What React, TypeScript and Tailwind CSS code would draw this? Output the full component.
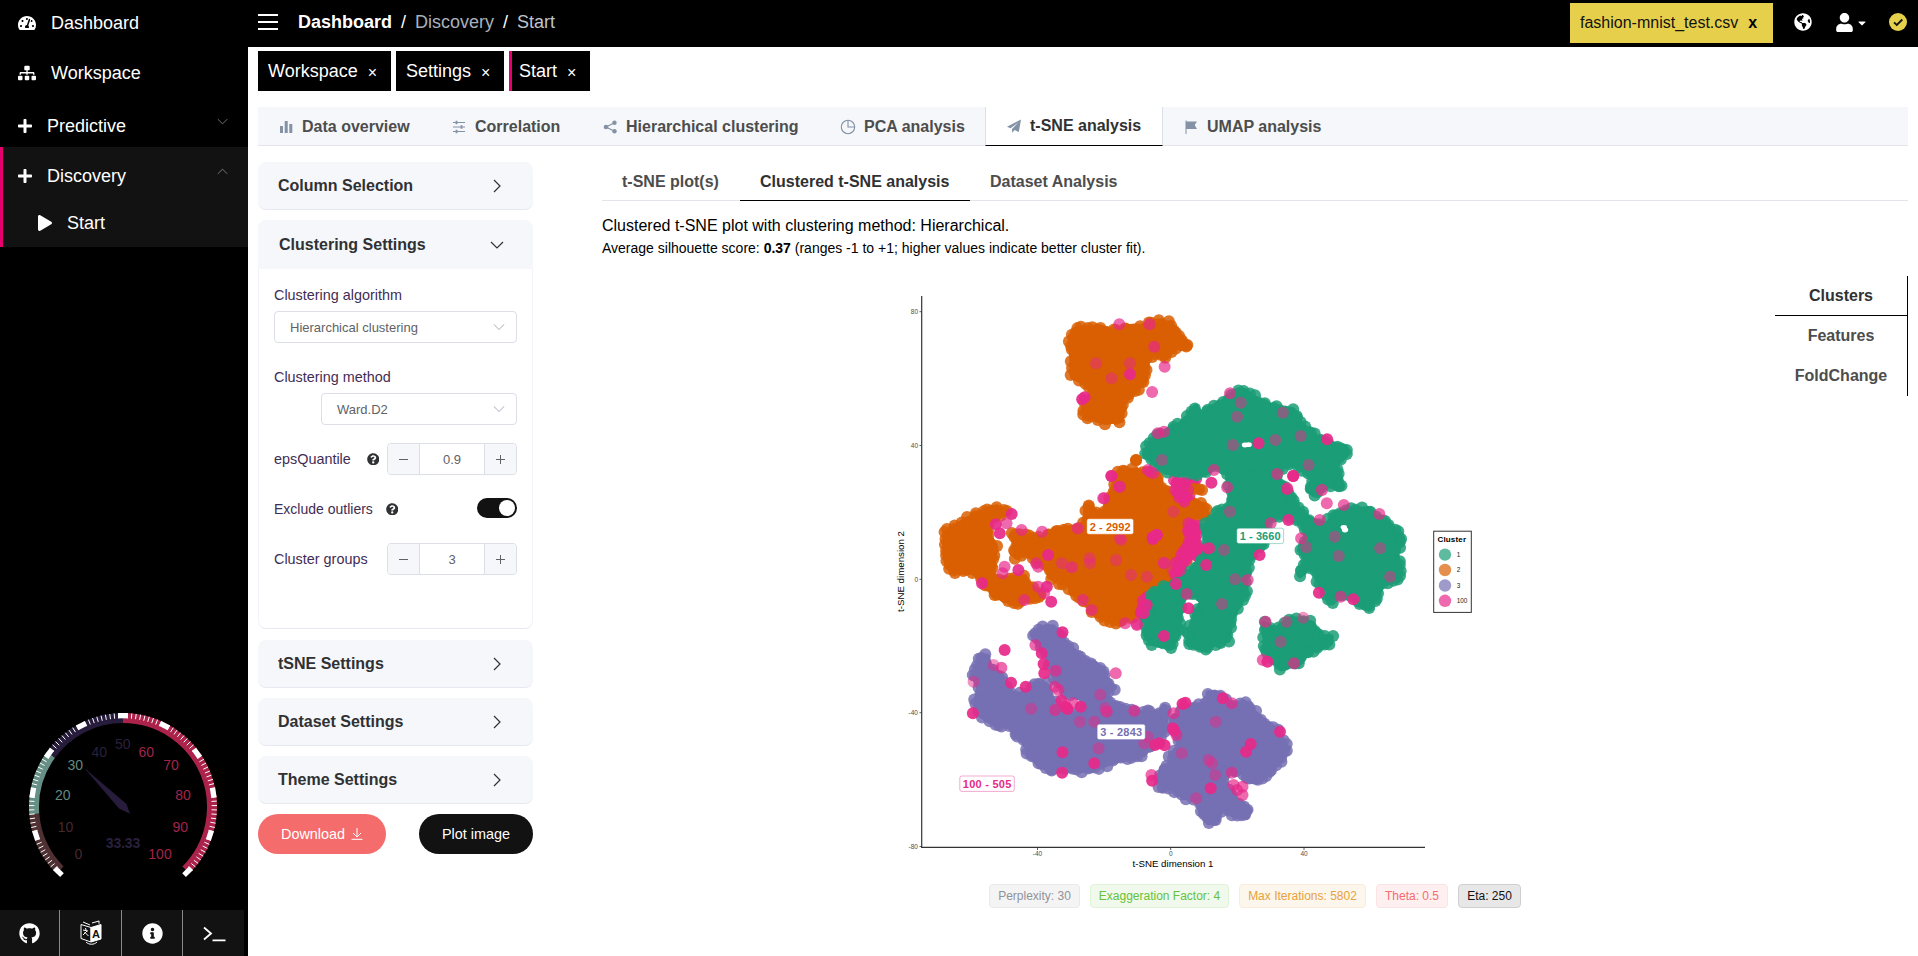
import React from "react";
import {
  FaTachometerAlt, FaSitemap, FaPlus, FaPlay, FaGithub, FaInfoCircle, FaGlobeAmericas, FaUser, FaQuestionCircle, FaCaretDown,
} from "react-icons/fa";

const GREEN = "#1b9e77";
const ORANGE = "#d95f02";
const PURPLE = "#7570b3";
const PINK = "#e7298a";

type Pt = [number, number];

/* Plot bands, each with its own origin and units per pixel. */
const band = (ox: number, oy: number, sx: number) => (s: string): Pt[] =>
  s.trim().split(/\s+/).map((p) => {
    const [x, y] = p.split(",").map(Number);
    return [ox + x / sx, oy + y / 3];
  });
const top = band(880, 280, 2.8);
const mid = band(880, 470, 2.529);
const low = band(880, 610, 2.8);
const core = band(1080, 440, 3);

const blobs: { color: string; pts: Pt[] }[] = [
  { color: ORANGE, pts: top("534,170 552,148 592,146 622,144 655,155 692,140 712,150 732,140 778,124 815,133 828,160 860,188 858,205 828,200 795,235 772,212 748,240 742,300 710,335 680,370 675,420 628,425 580,410 570,385 598,335 572,305 540,290 538,225") },
  { color: ORANGE, pts: mid("600,10 632,3 665,5 705,20 712,55 750,85 800,95 820,110 825,135 790,140 755,150 765,190 775,240 765,300 740,325 700,340 680,370 665,400 640,440 595,458 550,435 525,405 500,375 485,368 480,340 455,335 430,320 425,285 400,275 370,245 345,260 345,235 335,195 370,200 415,205 440,182 485,175 520,160 522,110 550,130 575,120 585,75") },
  { color: ORANGE, pts: mid("165,190 205,160 245,135 295,112 320,130 275,150 270,190 290,225 285,295 255,310 300,330 365,320 375,345 410,375 400,385 335,398 290,375 260,330 245,305 195,305 170,290 165,240") },
  { color: PINK, pts: core("285,125 345,122 330,150 318,180 300,170") },
  { color: PINK, pts: core("330,250 350,255 352,320 385,330 380,370 340,335 300,385 290,430 315,462 285,435 292,375 325,325") },
  { color: PINK, pts: core("205,470 190,540 180,525 195,485") },
  { color: ORANGE, pts: core("345,140 360,155 350,143") },
  { color: GREEN, pts: top("742,520 757,490 790,460 840,435 872,402 885,380 897,410 925,385 962,365 1000,332 1020,333 1055,360 1110,385 1155,390 1175,430 1205,458 1235,485 1300,502 1305,525 1270,550 1285,580 1290,625 1255,615 1215,642 1200,630 1215,600 1180,565 1150,550 1115,565 1085,585 1100,600 1140,650 1140,700 990,700 985,590 960,560 940,560 905,582 860,580 800,575 775,555") },
  { color: GREEN, pts: mid("880,15 1000,15 1035,75 1050,110 1075,140 1100,155 1130,165 1155,130 1180,120 1235,118 1255,150 1290,165 1320,205 1305,250 1315,300 1310,330 1270,340 1260,370 1235,415 1215,405 1200,375 1150,370 1140,395 1120,360 1100,300 1080,290 1062,315 1080,270 1062,240 1085,210 1070,160 1030,130 990,145 970,170 972,220 935,260 928,300 920,330 925,370 900,420 885,460 880,510 855,515 820,538 780,520 785,480 795,440 815,395 790,365 770,365 760,400 757,440 750,500 735,530 690,520 675,500 675,460 682,420 690,380 715,350 762,335 775,320 795,290 815,265 850,240 825,205 820,175 850,135 890,100 890,60") },
  { color: GREEN, pts: mid("975,490 970,462 1000,480 1035,450 1070,448 1095,465 1110,500 1140,502 1138,520 1110,535 1080,540 1065,575 1015,595 990,565 975,540") },
  { color: PURPLE, pts: low("430,75 450,57 485,52 500,80 535,115 550,130 565,160 600,160 625,180 635,215 655,232 630,250 622,268 665,285 720,310 755,308 780,320 795,290 800,320 792,370 770,380 740,430 700,445 660,450 615,470 565,480 530,465 485,485 450,465 415,435 415,410 400,390 375,370 370,350 320,340 275,310 270,270 280,240 265,190 280,150 300,140 305,170 340,200 360,250 400,255 430,225 465,225 482,270 515,312 560,312 580,270 525,250 490,205 475,150 450,100") },
  { color: PURPLE, pts: low("920,250 940,250 955,255 975,285 1020,278 1050,310 1080,340 1110,365 1140,415 1120,450 1090,485 1055,515 1025,510 1015,480 965,480 962,530 1000,575 1035,600 1027,620 985,612 960,590 940,630 920,637 900,610 890,570 850,560 820,530 790,540 780,510 790,475 830,460 815,435 840,410 830,370 825,330 850,300 885,290 920,280") },
];

const gaps: Pt[] = [...top("1022,495 1032,494"), ...mid("1173,172 1176,180")];

const solid: Pt[] = [
  ...top("700,283 573,352 566,358 1060,490 1252,478 1157,588 928,608 648,588"),
  ...mid("333,132 293,163 303,190 690,207 700,195 425,255 350,300 433,395 422,350 780,415 718,498 960,255 1033,150 1045,18 1110,368 1197,388 825,285 258,340 980,575"),
  ...core("290,130 305,150 315,172 345,318 350,325 338,320 345,295 335,265 218,292 230,285 190,520 200,495 288,432"),
  ...low("511,67 458,162 460,190 349,120 367,218 408,230 260,310 520,290 525,297 508,272 562,290 820,355 824,362 770,405 782,400 797,406 511,427 600,460 847,282 855,278 1120,365 1038,402 1025,425 453,130 960,265 926,535 510,488 762,512"),
];
const light: Pt[] = [
  ...top("670,133 755,133 797,260 762,336 768,200 980,340 778,460 795,455 1112,582 1140,628 935,570 972,622 750,570 672,620 625,655 765,580"),
  ...mid("567,85 585,18 605,50 320,160 358,180 410,185 830,235 400,290 395,280 485,292 315,290 310,310 400,350 365,390 718,280 760,300 650,465 620,460 513,390 535,420 930,330 988,160 1030,55 1130,100 1173,105 1263,132 1112,150 1065,205 1165,380 975,455 968,570 1047,580 500,175 415,370"),
  ...core("315,130 285,150 325,150 388,325 325,250 300,375 320,462 170,552 210,95"),
  ...low("435,105 340,173 660,190 492,182 490,230 500,240 540,280 490,300 635,305 712,302 822,310 985,280 985,488 990,525 1000,540 1015,555 1015,530 760,495 830,375"),
];
const tinted: Pt[] = [
  ...top("605,250 648,295 700,250 1010,368 1000,410 1128,398 988,495 1107,480 1200,555 1237,630 790,540 1178,468"),
  ...mid("530,265 597,270 635,315 675,320 870,240 865,402 898,328 1118,60 1150,200 1160,258 1078,232 1265,235 1290,320 885,125 1028,455 1070,443 1013,515 740,300 460,280 610,210"),
  ...core("252,368 30,370 120,295 280,215"),
  ...low("262,215 423,296 630,295 617,254 560,335 600,335 750,380 740,400 612,415 845,430 940,335 920,450 930,460 938,495 885,565 318,165"),
];

const rimDots = (pts: Pt[]): Pt[] => {
  let seed = pts.length * 7919;
  const rnd = () => {
    seed = (seed * 16807) % 2147483647;
    return seed / 2147483647 - 0.5;
  };
  return pts.flatMap((p, i) => {
    const q = pts[(i + 1) % pts.length];
    const n = Math.max(1, Math.round(Math.hypot(q[0] - p[0], q[1] - p[1]) / 5));
    return Array.from({ length: n }, (_, k): Pt => [
      p[0] + ((q[0] - p[0]) * k) / n + rnd() * 5,
      p[1] + ((q[1] - p[1]) * k) / n + rnd() * 5,
    ]);
  });
};

const Dots = ({ pts, fill, o }: { pts: Pt[]; fill: string; o: number }) => (
  <g fill={fill} fillOpacity={o}>
    {pts.map(([x, y], i) => <circle key={i} cx={x} cy={y} r={6} />)}
  </g>
);

const PlotLabel = ({ x, y, w, color, text }: { x: number; y: number; w: number; color: string; text: string }) => (
  <g>
    <rect x={x} y={y} width={w} height={15.4} rx={2} fill="#fff" stroke={color} strokeOpacity={0.5} strokeWidth={0.8} />
    <text x={x + w / 2} y={y + 11.7} textAnchor="middle" fontSize={11} fontWeight="bold" fill={color} textLength={w - 6}>{text}</text>
  </g>
);

function ScatterPlot() {
  return (
    <svg width={620} height={600} viewBox="880 280 620 600" fontFamily="Liberation Sans, Arial, sans-serif">
      {blobs.map((b, i) => (
        <g key={i}>
          <polygon points={b.pts.map((p) => p.join(",")).join(" ")} fill={b.color} stroke={b.color} strokeWidth={6} strokeLinejoin="round" />
          <Dots pts={rimDots(b.pts)} fill={b.color} o={0.85} />
        </g>
      ))}
      <Dots pts={top("717,540 717,541")} fill={ORANGE} o={0.9} />
      {gaps.map(([x, y], i) => <ellipse key={i} cx={x} cy={y} rx={3.2} ry={2.4} fill="#fff" />)}
      <Dots pts={light} fill={PINK} o={0.7} />
      <Dots pts={solid} fill={PINK} o={0.92} />
      <Dots pts={tinted} fill={PINK} o={0.5} />

      <path d="M921.7 296V847.5M921 847.3H1425" stroke="#333" strokeWidth={1.2} fill="none" />
      <g stroke="#333" strokeWidth={0.8}>
        {[311.7, 445.5, 579.3, 712.7, 846.5].map((y) => <path key={y} d={`M919.5 ${y}h2`} />)}
        {[1037.5, 1170.7, 1304].map((x) => <path key={x} d={`M${x} 848v2`} />)}
      </g>
      <g fontSize={6.5} fill="#4d4d4d">
        {([["80", 311.7], ["40", 445.5], ["0", 579.3], ["-40", 712.7], ["-80", 846.5]] as [string, number][]).map(([t, y]) => (
          <text key={t} x={918} y={y + 2.2} textAnchor="end">{t}</text>
        ))}
        {([["-40", 1037.5], ["0", 1170.7], ["40", 1304]] as [string, number][]).map(([t, x]) => (
          <text key={t} x={x} y={855.6} textAnchor="middle">{t}</text>
        ))}
      </g>
      <text x={1173} y={866.5} fontSize={9.8} textAnchor="middle" textLength={81} lengthAdjust="spacingAndGlyphs">t-SNE dimension 1</text>
      <text transform="translate(904 571.5) rotate(-90)" fontSize={9.8} textAnchor="middle" textLength={81} lengthAdjust="spacingAndGlyphs">t-SNE dimension 2</text>

      <PlotLabel x={1086.8} y={518.8} w={46.7} color={ORANGE} text="2 - 2992" />
      <PlotLabel x={1236.8} y={528.2} w={46.8} color={GREEN} text="1 - 3660" />
      <PlotLabel x={1097.2} y={724.2} w={48} color={PURPLE} text="3 - 2843" />
      <PlotLabel x={959.8} y={776} w={54.5} color={PINK} text="100 - 505" />

      <rect x={1433.7} y={531.2} width={37.6} height={81.2} fill="#fff" stroke="#333" />
      <text x={1437.5} y={542.3} fontSize={8} fontWeight="bold" textLength={28.5}>Cluster</text>
      {([["1", GREEN, 554.6], ["2", ORANGE, 570], ["3", PURPLE, 585.5], ["100", PINK, 600.8]] as [string, string, number][]).map(([t, c, y]) => (
        <g key={t}>
          <circle cx={1445} cy={y} r={6.2} fill={c} fillOpacity={0.7} />
          <text x={1456.7} y={y + 2.4} fontSize={6.4} fill="#222">{t}</text>
        </g>
      ))}
    </svg>
  );
}

/* ---------- gauge ---------- */
const polar = (v: number, r: number): Pt => {
  const a = ((225 - v * 2.7) * Math.PI) / 180;
  return [95 + r * Math.cos(a), 95 - r * Math.sin(a)];
};
const arc = (a: number, b: number) => {
  const [x1, y1] = polar(a, 89);
  const [x2, y2] = polar(b, 89);
  return `M${x1} ${y1}A89 89 0 ${(b - a) * 2.7 > 180 ? 1 : 0} 1 ${x2} ${y2}`;
};
const tickPath = (v: number) => {
  const [x1, y1] = polar(v, 88.7);
  const [x2, y2] = polar(v, 94);
  return `M${x1} ${y1}L${x2} ${y2}`;
};
const gaugeLabels: [string, number, number, string][] = [
  ["0", 78.3, 853, "#46292d"], ["10", 65.6, 826, "#46292d"], ["20", 62.7, 794, "#63897f"], ["30", 75.3, 764, "#63897f"],
  ["40", 99.3, 751, "#2a203d"], ["50", 122.8, 743, "#2a203d"], ["60", 146.3, 751, "#a3244b"], ["70", 171, 764, "#a3244b"],
  ["80", 183, 794, "#a3244b"], ["90", 180.3, 826, "#a3244b"], ["100", 160, 853, "#a3244b"],
];

function Gauge() {
  return (
    <svg width={190} height={180} viewBox="0 0 190 180" fontFamily="Liberation Sans, Arial, sans-serif">
      <g fill="none" strokeWidth={10}>
        <path d={arc(0, 15)} stroke="#4f3033" />
        <path d={arc(15, 30)} stroke="#668f86" />
        <path d={arc(30, 50)} stroke="#271c3b" />
        <path d={arc(50, 100)} stroke="#ab234b" />
      </g>
      <g stroke="#fff">
        {Array.from({ length: 101 }, (_, i) => (
          <path key={i} d={tickPath(i)} strokeWidth={i % 10 === 0 ? 10 : 1} />
        ))}
      </g>
      <g transform="translate(-28 -711)" fontSize={14} textAnchor="middle">
        {gaugeLabels.map(([t, x, y, c]) => <text key={t} x={x} y={y + 5} fill={c}>{t}</text>)}
        <text x={123} y={847.3} fontWeight="bold" fill="#2a203d" textLength={34.5}>33.33</text>
        <path d="M84 766.7L126.5 803L130 812.7L119 807.5Z" fill="#271c3b" />
      </g>
    </svg>
  );
}

/* ---------- small icons ---------- */
const Chevron = ({ dir, size = 14, color = "#303133", w = 1.2 }: { dir: "down" | "up" | "right"; size?: number; color?: string; w?: number }) => {
  const d = { down: "M1 4l6 6 6-6", up: "M1 10l6-6 6 6", right: "M4 1l6 6-6 6" }[dir];
  return <svg width={size} height={size} viewBox="0 0 14 14" fill="none" stroke={color} strokeWidth={w}><path d={d} /></svg>;
};

const tabIcons = {
  bars: <path d="M2 7h3v7H2zM6.7 2h3v12h-3zM11.3 5h3v9h-3z" fill="#8492a6" />,
  sliders: (
    <g stroke="#8492a6" strokeWidth={1.2}>
      <path d="M2 3.500h12M2 8h12M2 12.500h12" />
      <path d="M5.500 1.700v3.600M10.500 6.200v3.600M5.500 10.700v3.600" strokeWidth={1.800} />
    </g>
  ),
  share: (
    <g fill="#8492a6">
      <path d="M4 8l8.500-4.300M4 8l8.500 4.300" stroke="#8492a6" strokeWidth={1.2} />
      <circle cx={4} cy={8} r={2.300} /><circle cx={12.500} cy={3.700} r={2.200} /><circle cx={12.500} cy={12.300} r={2.200} />
    </g>
  ),
  pie: (
    <g fill="none" stroke="#8492a6" strokeWidth={1.1}>
      <circle cx={8} cy={8} r={6.700} /><path d="M8 1.300V8h6.700" />
    </g>
  ),
  plane: <path d="M15 1.500L12.800 14 8.600 12.100 6.200 14.700 6 11 12.500 4.300 4.500 10.300 1 8.800z" fill="#8492a6" />,
  flag: <path d="M2.500 1.500h1v1h10.500l-2.300 3.500 2.300 4H3.500v5h-1z" fill="#8492a6" />,
};

const tabs: { icon: keyof typeof tabIcons; label: string; w: string; active?: boolean }[] = [
  { icon: "bars", label: "Data overview", w: "w-[173px]" },
  { icon: "sliders", label: "Correlation", w: "w-[151px]" },
  { icon: "share", label: "Hierarchical clustering", w: "w-[238px]" },
  { icon: "pie", label: "PCA analysis", w: "w-[165px]" },
  { icon: "plane", label: "t-SNE analysis", w: "w-[178px]", active: true },
  { icon: "flag", label: "UMAP analysis", w: "w-[180px]" },
];

const CardHead = ({ title, open = false }: { title: string; open?: boolean }) => (
  <div className={`flex items-center justify-between bg-[#f5f7fa] pr-[29px] text-base font-bold text-[#303133] ${open ? "h-[49px] rounded-t-lg pl-[21px]" : "mb-[10px] h-[48px] rounded-lg border-b border-[#e6e8f2] pl-5"}`}>
    {title}
    <Chevron dir={open ? "down" : "right"} />
  </div>
);

const Select = ({ value, className }: { value: string; className: string }) => (
  <div className={`flex h-8 items-center justify-between rounded border border-[#dcdfe6] pr-[11px] pl-[15px] text-[13px] text-[#606266] ${className}`}>
    {value}
    <Chevron dir="down" size={12} color="#c0c4cc" />
  </div>
);

const Stepper = ({ value }: { value: string }) => (
  <div className="flex h-8 w-[130px] items-center overflow-hidden rounded border border-[#dcdfe6] text-[13px] text-[#606266]">
    <div className="flex h-full w-8 items-center justify-center border-r border-[#dcdfe6] bg-[#f5f7fa]">
      <svg width={11} height={11} stroke="#606266"><path d="M1 5.500h9" /></svg>
    </div>
    <div className="flex-1 text-center">{value}</div>
    <div className="flex h-full w-8 items-center justify-center border-l border-[#dcdfe6] bg-[#f5f7fa]">
      <svg width={11} height={11} stroke="#606266"><path d="M1 5.500h9M5.500 1v9" /></svg>
    </div>
  </div>
);

const params: { text: string; cls: string }[] = [
  { text: "Perplexity: 30", cls: "w-[91px] border-[#e9e9eb] bg-[#f4f4f5] text-[#909399]" },
  { text: "Exaggeration Factor: 4", cls: "w-[139px] border-[#e1f3d8] bg-[#f0f9eb] text-[#67c23a]" },
  { text: "Max Iterations: 5802", cls: "w-[127px] border-[#faecd8] bg-[#fdf6ec] text-[#e6a23c]" },
  { text: "Theta: 0.5", cls: "w-[72px] border-[#fde2e2] bg-[#fef0f0] text-[#f56c6c]" },
  { text: "Eta: 250", cls: "w-[63px] border-[#cfcfcf] bg-[#e7e7e7] text-[#121212]" },
];

function Sidebar() {
  return (
    <aside className="flex h-full w-[248px] shrink-0 flex-col bg-black text-[18px] text-white">
      <div className="flex h-[45px] items-center pl-[18px]"><FaTachometerAlt size={18} /><span className="ml-[15px]">Dashboard</span></div>
      <div className="flex h-[55px] items-center pl-[18px]"><FaSitemap size={18} /><span className="ml-[15px]">Workspace</span></div>
      <div className="flex h-[47px] items-center pt-[5px] pl-[17px]">
        <FaPlus size={16} /><span className="ml-[14px] flex-1">Predictive</span>
        <span className="mr-[20px] mb-[10px]"><Chevron dir="down" size={11} color="#909399" w={1} /></span>
      </div>
      <div className="h-[100px] border-l-[3px] border-[#e6006e] bg-[#121212]">
        <div className="flex h-[57px] items-center pl-[14px]">
          <FaPlus size={16} /><span className="ml-[14px] flex-1">Discovery</span>
          <span className="mr-[20px] mb-[8px]"><Chevron dir="up" size={11} color="#909399" w={1} /></span>
        </div>
        <div className="flex h-[38px] items-center pl-[34px]"><FaPlay size={16} /><span className="ml-[14px]">Start</span></div>
      </div>
      <div className="mt-auto mb-[18px] pl-7"><Gauge /></div>
      <div className="flex h-[46px] w-[244px] bg-[#121212]">
        <div className="flex w-[60px] items-center justify-center border-r border-[#888]"><FaGithub size={21} /></div>
        <div className="flex w-[62px] items-center justify-center border-r border-[#888]">
          <svg width={22} height={26} viewBox="0 0 22 26" fill="none" stroke="#fff">
            <path d="M1 4.500l10 3v14.500L1 18.500z" />
            <path d="M11 7.500l10-3v14.500l-10 3z" fill="#fff" />
            <path d="M3 2l7 3M19 .8v3M12 3l7-2M6 22c3 3 8 3 11 0M3 10l5 1M5.500 8l.5 2M7 11l-4 4M4.500 12l4 4" />
            <text x={16} y={17.500} fontSize={11} fontWeight="bold" fill="#121212" stroke="none" textAnchor="middle">A</text>
          </svg>
        </div>
        <div className="flex w-[61px] items-center justify-center border-r border-[#888]"><FaInfoCircle size={21} /></div>
        <div className="flex flex-1 items-center justify-center">
          <svg width={24} height={18} viewBox="0 0 24 18" fill="none" stroke="#fff" strokeWidth={1.8}><path d="M2 3.500l7 6-7 6M10.500 16.300H23.500" /></svg>
        </div>
      </div>
    </aside>
  );
}

function Header() {
  return (
    <header className="flex h-[47px] shrink-0 items-start bg-black pl-[10px] text-[18px] text-white">
      <div className="flex h-[44px] flex-1 items-center">
        <svg width={20} height={18} stroke="#fff" strokeWidth={2}><path d="M0 2h20M0 9h20M0 16h20" /></svg>
        <span className="ml-[20px] w-[94px] text-[18px] font-bold">Dashboard</span>
        <span className="ml-[9px]">/</span>
        <span className="ml-[9px] text-[#a9b0bd]">Discovery</span>
        <span className="ml-[9px]">/</span>
        <span className="ml-[9px] text-[#c0c4cc]">Start</span>
      </div>
      <div className="mt-[3px] flex h-10 w-[203px] items-center bg-[#e6d04b] pl-[10px] text-[16px] text-[#121212]">
        fashion-mnist_test.csv<b className="ml-[10px] text-black">x</b>
      </div>
      <div className="flex h-[44px] w-[145px] items-center pl-[21px]">
        <FaGlobeAmericas size={18} />
        <FaUser size={19} className="ml-[23px]" />
        <FaCaretDown size={12} className="ml-[2px] mt-[2px]" />
        <svg width={18} height={18} className="ml-[21px]"><circle cx={9} cy={9} r={9} fill="#e6d04b" /><path d="M5 9.300l2.800 2.700L13.300 6.500" fill="none" stroke="#111" strokeWidth={1.800} /></svg>
      </div>
    </header>
  );
}

export default function App() {
  return (
    <div className="flex h-[956px] w-[1918px] overflow-hidden bg-white font-['Liberation_Sans',Arial,sans-serif] leading-none whitespace-nowrap">
      <Sidebar />
      <div className="flex min-w-0 flex-1 flex-col">
        <Header />
        <div className="mt-1 ml-[10px] flex h-10 gap-[5px] text-[18px] text-white">
          <div className="flex w-[133px] items-center bg-black pl-[10px]">Workspace<span className="ml-[10px] pt-1 text-[16px]">×</span></div>
          <div className="flex w-[108px] items-center bg-black pl-[10px]">Settings<span className="ml-[10px] pt-1 text-[16px]">×</span></div>
          <div className="flex w-[81px] items-center border-l-[3px] border-[#e6006e] bg-black pl-[7px]">Start<span className="ml-[10px] pt-1 text-[16px]">×</span></div>
        </div>

        <nav className="mt-4 mr-[10px] ml-[10px] flex h-[39px] shrink-0 border-b border-[#e4e4ed] bg-[#f5f7fa] text-base font-bold text-[#4d4d4d]">
          {tabs.map((t) => (
            <div key={t.label} className={`flex h-[39px] items-center gap-2 pl-5 ${t.w} ${t.active ? "border-x border-b border-x-[#dcdfe6] border-b-black bg-white text-[#303133]" : ""}`}>
              <svg width={16} height={16}>{tabIcons[t.icon]}</svg>
              {t.label}
            </div>
          ))}
        </nav>

        <div className="mr-[10px] ml-[10px] flex pt-4">
          <section className="w-[275px] shrink-0">
            <CardHead title="Column Selection" />
            <div className="mb-[11px] h-[409px] rounded-lg border-b border-[#e6e8f2]">
              <CardHead title="Clustering Settings" open />
              <div className="h-[359px] rounded-b-lg border-x border-[#f2f3f9] pr-[15px] pl-[15px] text-[14.400px] text-[#3f2d54]">
                <div className="flex h-[42px] items-end pb-[9px]">Clustering algorithm</div>
                <Select value="Hierarchical clustering" className="w-[243px]" />
                <div className="flex h-[50px] items-end pb-[9px]">Clustering method</div>
                <Select value="Ward.D2" className="ml-[47px] w-[196px]" />
                <div className="mt-[18px] flex h-8 items-center">
                  <span className="flex-1">epsQuantile</span><FaQuestionCircle size={12.500} color="#303133" className="mr-[8px]" /><Stepper value="0.9" />
                </div>
                <div className="mt-[18px] flex h-8 items-center">
                  <span className="text-[14px]">Exclude outliers</span><FaQuestionCircle size={12.500} color="#303133" className="ml-[13px]" />
                  <div className="mb-[2px] ml-auto flex h-5 w-10 items-center justify-end rounded-full bg-[#121212] pr-[2px]"><div className="size-4 rounded-full bg-white" /></div>
                </div>
                <div className="mt-[18px] flex h-8 items-center justify-between">Cluster groups<Stepper value="3" /></div>
              </div>
            </div>
            <CardHead title="tSNE Settings" />
            <CardHead title="Dataset Settings" />
            <CardHead title="Theme Settings" />
            <div className="flex justify-between text-[14.400px] text-white">
              <div className="flex h-10 w-32 items-center justify-center gap-[6px] rounded-full bg-[#f56c6c]">
                Download
                <svg width={12} height={12} fill="none" stroke="#fff"><path d="M6 0v8.500M2 5l4 4 4-4M.5 11.300h11" /></svg>
              </div>
              <div className="flex h-10 w-[114px] items-center justify-center rounded-full bg-[#121212]">Plot image</div>
            </div>
          </section>

          <section className="ml-[69px] flex-1">
            <div className="flex h-[39px] border-b border-[#e4e4ed] text-base font-bold text-[#4d4d4d]">
              <div className="w-[138px] pt-[8px] pl-5">t-SNE plot(s)</div>
              <div className="h-[39px] w-[230px] border-b border-black pt-[8px] pl-5 text-[#303133]">Clustered t-SNE analysis</div>
              <div className="pt-[8px] pl-5">Dataset Analysis</div>
            </div>
            <p className="mt-[13px] text-base text-black">Clustered t-SNE plot with clustering method: Hierarchical.</p>
            <p className="mt-[3px] text-[14px] text-black">Average silhouette score: <b>0.37</b> (ranges -1 to +1; higher values indicate better cluster fit).</p>
            <div className="mt-[21px] flex justify-between pl-[278px]">
              <div className="mt-1"><ScatterPlot /></div>
              <div className="h-[120px] w-[133px] border-r border-black text-center text-base font-bold text-[#4d4d4d]">
                <div className="h-10 border-b border-black pt-[8px] text-[#303133]">Clusters</div>
                <div className="h-10 pt-[8px]">Features</div>
                <div className="h-10 pt-[8px]">FoldChange</div>
              </div>
            </div>
            <div className="mt-[4px] flex gap-[10px] pl-[387px]">
              {params.map((p) => (
                <span key={p.text} className={`flex h-6 items-center justify-center rounded border text-[12px] ${p.cls}`}>{p.text}</span>
              ))}
            </div>
          </section>
        </div>
      </div>
    </div>
  );
}
